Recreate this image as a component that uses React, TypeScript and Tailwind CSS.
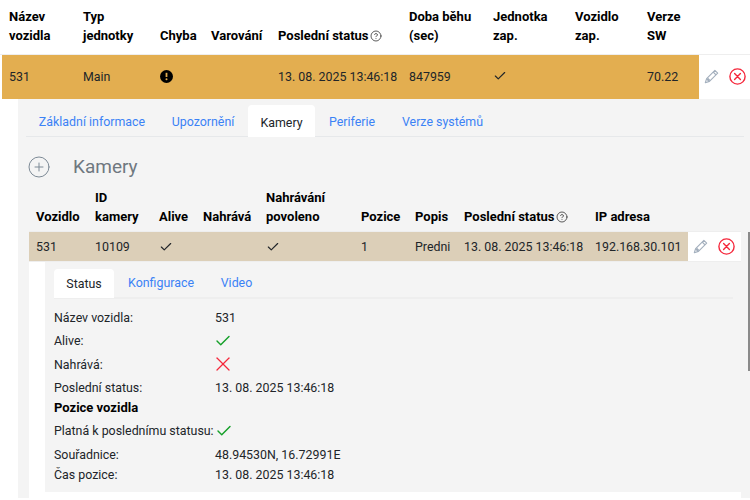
import { Check, CirclePlus, CircleHelp, X } from "lucide-react";

function Pencil() {
  return (
    <svg width="15" height="15" viewBox="0 0 16 16" fill="none" stroke="#a3afbd" strokeWidth="1.2" strokeLinejoin="round">
      <path d="M11.6 1.4l3 3-8.8 8.8-4.4 1.4 1.4-4.4z" />
      <path d="M9.8 3.2l3 3" />
      <path d="M3.4 10.2l2.4 2.4" strokeWidth="2.6" />
    </svg>
  );
}

function RemoveIcon() {
  return (
    <svg width="17" height="17" viewBox="0 0 17 17" fill="none" stroke="#f5283c" strokeWidth="1.4" strokeLinecap="round">
      <circle cx="8.5" cy="8.5" r="7.6" />
      <path d="M5.6 5.6l5.8 5.8M11.4 5.6l-5.8 5.8" />
    </svg>
  );
}

function ErrorIcon() {
  return (
    <svg width="13" height="13" viewBox="0 0 13 13">
      <circle cx="6.5" cy="6.5" r="6.5" fill="#000" />
      <path d="M6.5 2.8v4.2" stroke="#e3ae50" strokeWidth="1.8" />
      <circle cx="6.5" cy="9.2" r="1" fill="#e3ae50" />
    </svg>
  );
}

function Actions() {
  return (
    <div className="flex items-center gap-[10px]">
      <Pencil />
      <RemoveIcon />
    </div>
  );
}

function StatusHead() {
  return (
    <span className="flex items-center gap-[1px]">
      Poslední status
      <CircleHelp size={12} strokeWidth={1.6} className="text-[#333]" />
    </span>
  );
}

function Tab({ label, active, wide }: { label: string; active?: boolean; wide: string }) {
  return (
    <div
      className={`flex items-center justify-center rounded-t-[4px] ${wide} ${
        active ? "bg-white text-[#212529] relative top-[1px]" : "text-[#3b82f6]"
      }`}
    >
      {label}
    </div>
  );
}

function Row({ label, h, children }: { label: string; h: string; children?: React.ReactNode }) {
  return (
    <div className={`flex items-center ${h}`}>
      <div className="w-[161px] shrink-0">{label}</div>
      {children}
    </div>
  );
}

export default function App() {
  return (
    <div className="relative h-[500px] w-[750px] overflow-hidden bg-white text-[12.4px] leading-[19px] text-[#212529] [font-family:Roboto,sans-serif]">
      {/* Jednotky */}
      <div className="ml-[2px] flex h-[54px] items-end pb-[9px] text-[13px] font-bold text-black">
        <div className="w-[81px] pl-[7px]">Název<br />vozidla</div>
        <div className="w-[77px]">Typ<br />jednotky</div>
        <div className="w-[51px]">Chyba</div>
        <div className="w-[67px]">Varování</div>
        <div className="w-[131px]"><StatusHead /></div>
        <div className="w-[84px]">Doba běhu<br />(sec)</div>
        <div className="w-[82px]">Jednotka<br />zap.</div>
        <div className="w-[72px]">Vozidlo<br />zap.</div>
        <div>Verze<br />SW</div>
      </div>
      <div className="flex h-[45px] border-t border-[#eee]">
        <div className="ml-[2px] flex w-[697px] shrink-0 items-center bg-[#e3ae50] pb-[2px]">
          <div className="w-[81px] pl-[7px]">531</div>
          <div className="w-[77px]">Main</div>
          <div className="w-[51px]"><ErrorIcon /></div>
          <div className="w-[67px]" />
          <div className="w-[131px]">13. 08. 2025 13:46:18</div>
          <div className="w-[84px]">847959</div>
          <div className="w-[82px]"><Check size={14} strokeWidth={2} /></div>
          <div className="w-[72px]" />
          <div>70.22</div>
        </div>
        <div className="flex flex-1 items-center pb-[2px] pl-[5px]">
          <Actions />
        </div>
      </div>

      {/* Detail jednotky */}
      <div className="ml-[18px] h-[399px] bg-[#f4f4f4] px-[8px] pt-[5px]">
        <div className="flex h-[33px] w-[718px] border-b border-[#e6e8ea]">
          <Tab label="Základní informace" wide="w-[132px] pt-[2px]" />
          <Tab label="Upozornění" wide="w-[90px] pt-[2px]" />
          <Tab label="Kamery" active wide="w-[67px] pt-[2px]" />
          <Tab label="Periferie" wide="w-[74px] pt-[2px]" />
          <Tab label="Verze systémů" wide="w-[107px] pt-[2px]" />
        </div>

        <div className="flex h-[59px] items-center pl-[1px]">
          <CirclePlus size={24} strokeWidth={1} className="text-[#7d8a96]" />
          <span className="ml-[22px] text-[19px] text-[#6f7880]">Kamery</span>
        </div>

        {/* Kamery */}
        <div className="ml-[3px] flex h-[35px] items-end pb-[5px] text-[13px] font-bold text-black">
          <div className="w-[66px] pl-[7px]">Vozidlo</div>
          <div className="w-[64px]">ID<br />kamery</div>
          <div className="w-[44px]">Alive</div>
          <div className="w-[63px]">Nahrává</div>
          <div className="w-[95px]">Nahrávání<br />povoleno</div>
          <div className="w-[54px]">Pozice</div>
          <div className="w-[49px]">Popis</div>
          <div className="w-[131px]"><StatusHead /></div>
          <div>IP adresa</div>
        </div>
        <div className="ml-[3px] flex h-[31px] w-[712px] border-y border-[#eee]">
          <div className="flex w-[659px] shrink-0 items-center bg-[#dccfb8]">
            <div className="w-[66px] pl-[7px]">531</div>
            <div className="w-[64px]">10109</div>
            <div className="w-[44px]"><Check size={14} strokeWidth={2} /></div>
            <div className="w-[63px]" />
            <div className="w-[95px]"><Check size={14} strokeWidth={2} /></div>
            <div className="w-[54px]">1</div>
            <div className="w-[49px]">Predni</div>
            <div className="w-[131px]">13. 08. 2025 13:46:18</div>
            <div>192.168.30.101</div>
          </div>
          <div className="flex flex-1 items-center bg-white pl-[5px]">
            <Actions />
          </div>
        </div>

        {/* Detail kamery */}
        <div className="ml-[3px] h-[236px] w-[712px] bg-white pb-[6px] pl-[16px]">
          <div className="h-full bg-[#f4f4f4] pl-[9px] pt-[6px]">
            <div className="flex h-[31px] w-[679px] border-b-2 border-[#eeeeee]">
              <Tab label="Status" active wide="w-[60px]" />
              <Tab label="Konfigurace" wide="w-[94px]" />
              <Tab label="Video" wide="w-[57px]" />
            </div>
            <div className="pt-[7px]">
              <Row label="Název vozidla:" h="h-[23px]">531</Row>
              <Row label="Alive:" h="h-[23px]"><Check size={18} strokeWidth={1.9} className="-ml-[1px] text-[#16a02a]" /></Row>
              <Row label="Nahrává:" h="h-[24px]"><X size={24} strokeWidth={1.3} className="-ml-[4px] text-[#f5283c]" /></Row>
              <Row label="Poslední status:" h="h-[22px]">13. 08. 2025 13:46:18</Row>
              <div className="flex h-[19px] items-center text-[13px] font-bold text-black">Pozice vozidla</div>
              <div className="flex h-[27px] items-center">
                Platná k poslednímu statusu:
                <Check size={18} strokeWidth={1.9} className="ml-[1px] text-[#16a02a]" />
              </div>
              <Row label="Souřadnice:" h="h-[21px]">48.94530N, 16.72991E</Row>
              <Row label="Čas pozice:" h="h-[19px]">13. 08. 2025 13:46:18</Row>
            </div>
          </div>
        </div>
      </div>

      {/* Scrollbar */}
      <div className="absolute right-0 top-[232px] h-[139px] w-[2px] bg-[#8a8a8a]" />
    </div>
  );
}
